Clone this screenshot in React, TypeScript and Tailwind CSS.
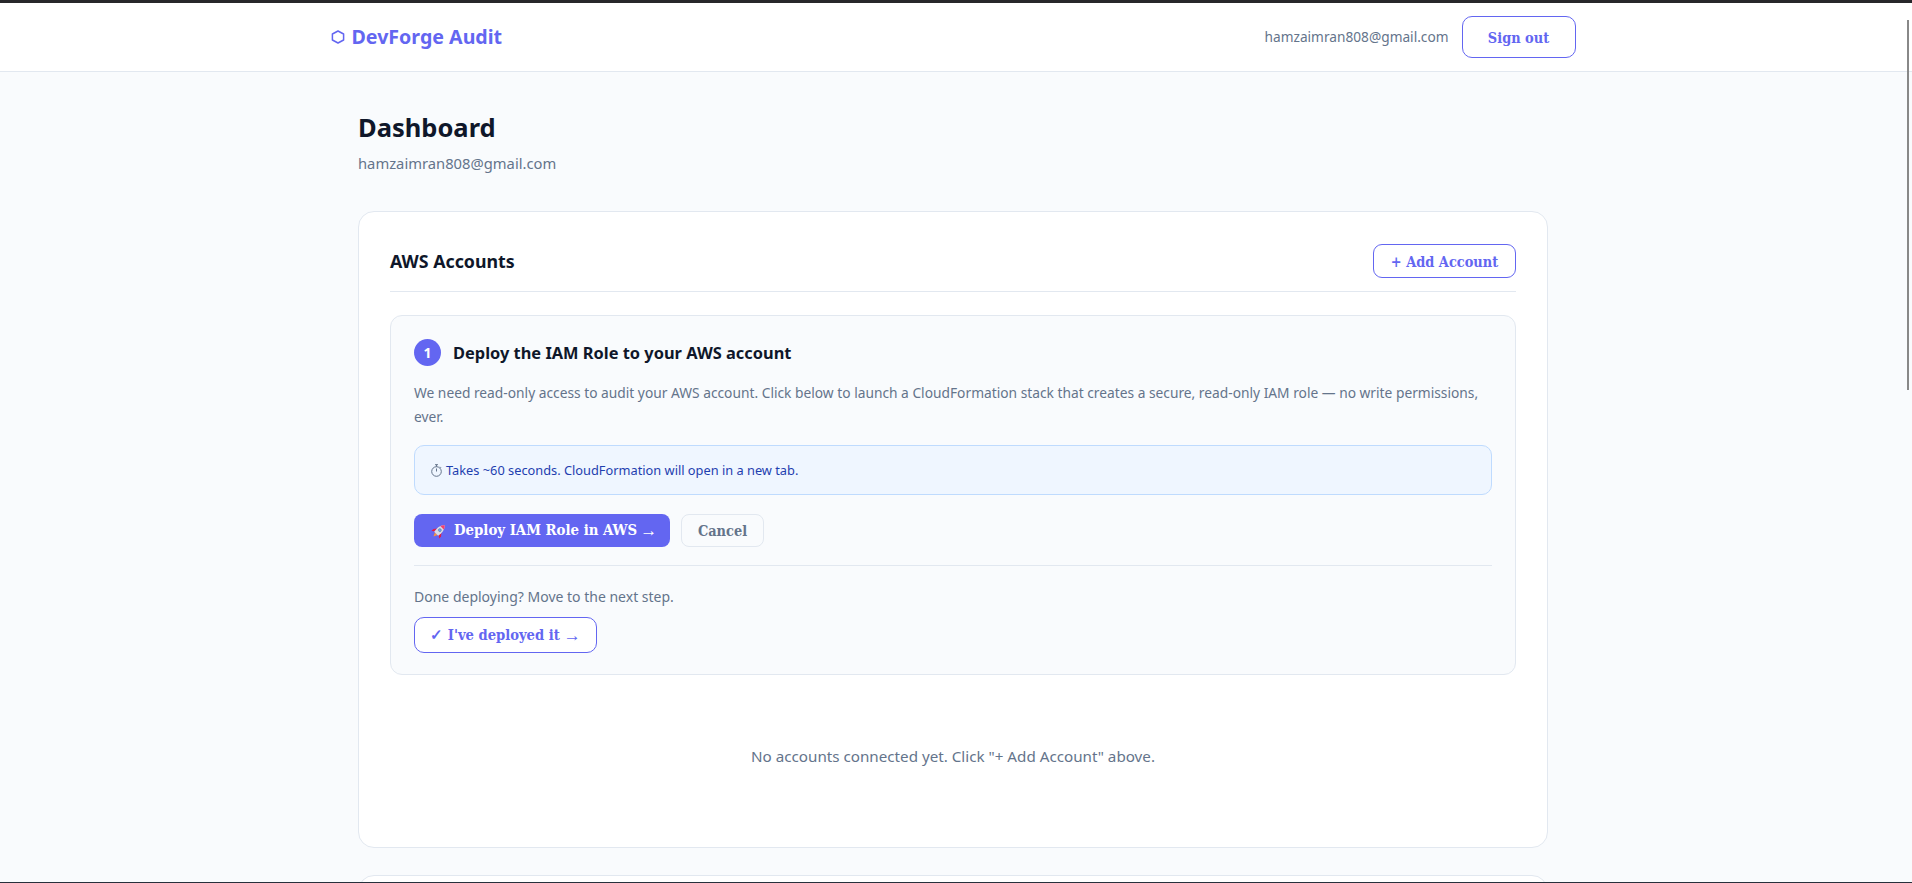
import React from "react";

const sans = "font-['Noto_Sans',sans-serif]";
const serif = "font-['DejaVu_Serif_Condensed','DejaVu_Serif',serif]";

function Arrow() {
  return <span className="font-['Liberation_Serif'] text-[17px] leading-none font-normal">→</span>;
}

function Hexagon() {
  return (
    <svg width="14" height="14" viewBox="0 0 14 14" fill="none" stroke="#6366f1" strokeWidth="1.5" className="shrink-0">
      <path d="M7 1 L12.6 4 V10 L7 13 L1.4 10 V4 Z" strokeLinejoin="round" />
    </svg>
  );
}

function Rocket() {
  return (
    <svg width="16" height="16" viewBox="0 0 16 16" className="shrink-0">
      <g transform="rotate(45 8 8)">
        <path d="M6.2 12 H9.8 L8 15.8 Z" fill="#fb923c" />
        <path d="M5 7.5 L2.6 10.5 V13.2 L5.2 11.4 Z" fill="#e11d48" />
        <path d="M11 7.5 L13.4 10.5 V13.2 L10.8 11.4 Z" fill="#e11d48" />
        <path d="M8 0 C10.4 2 11.2 5 11.2 8 L10.8 12 H5.2 L4.8 8 C4.8 5 5.6 2 8 0 Z" fill="#d8dbe6" />
        <path d="M8 0 C9.2 1 10 2.2 10.5 3.6 H5.5 C6 2.2 6.8 1 8 0 Z" fill="#f43f6e" />
        <circle cx="8" cy="6.8" r="1.5" fill="#60a5fa" stroke="#64748b" strokeWidth="0.5" />
      </g>
    </svg>
  );
}

function Stopwatch() {
  return (
    <svg width="11" height="13" viewBox="0 0 11 13" fill="none" stroke="#64748b" strokeWidth="1" className="shrink-0">
      <circle cx="5.5" cy="7.5" r="4.8" />
      <path d="M4 .7h3M5.5 .7v2M5.5 7.5V4.5M9 2.8l1 1" />
    </svg>
  );
}

export default function App() {
  return (
    <div className={`relative flex h-screen flex-col overflow-hidden bg-[#f9fbfd] ${sans}`}>
      <div className="h-[3px] shrink-0 bg-[#27272a]" />
      <header className="flex h-[69px] shrink-0 border-b border-[#e2e8f0] bg-white pr-[6px]">
        <div className="mx-auto flex w-[1245px] items-center justify-between">
          <div className="flex items-center gap-[7px] text-[19.6px] font-bold text-[#6366f1]">
            <Hexagon />
            <span>DevForge Audit</span>
          </div>
          <div className="flex items-center gap-[13px]">
            <span className="text-[13.7px] text-[#64748b]">hamzaimran808@gmail.com</span>
            <button className={`h-[42px] w-[114px] rounded-[10px] border border-[#6366f1] bg-white pt-[1px] text-[14.4px] font-bold text-[#6366f1] ${serif}`}>
              Sign out
            </button>
          </div>
        </div>
      </header>

      <main className="mx-auto flex w-[1190px] -translate-x-[3px] shrink-0 flex-col pt-[37px]">
        <h1 className="text-[25.5px] leading-[36px] font-bold text-[#0f172a]">Dashboard</h1>
        <p className="mt-[6px] text-[14.75px] leading-[24px] text-[#64748b]">hamzaimran808@gmail.com</p>

        <section className="mt-[36px] flex h-[637px] flex-col rounded-[16px] border border-[#e2e8f0] bg-white px-[31px] pt-[32px]">
          <div className="flex h-[48px] items-start justify-between border-b border-[#e2e8f0]">
            <h2 className="pt-[5px] text-[17.8px] leading-[24px] font-bold text-[#0f172a]">AWS Accounts</h2>
            <button className={`h-[34px] w-[143px] rounded-[9px] border border-[#6366f1] bg-white pt-[1px] text-[14.4px] font-bold text-[#6366f1] ${serif}`}>
              + Add Account
            </button>
          </div>

          <div className="mt-[23px] flex h-[360px] flex-col rounded-[12px] border border-[#e2e8f0] bg-[#f9fbfd] px-[23px] pt-[23px]">
            <div className="flex items-center gap-[12px]">
              <span className="flex h-[27px] w-[27px] items-center justify-center rounded-full bg-[#6366f1] text-[14px] font-bold text-white">1</span>
              <h3 className="pt-[1px] text-[16.4px] font-bold text-[#0f172a]">Deploy the IAM Role to your AWS account</h3>
            </div>
            <p className="mt-[15px] text-[13.78px] leading-[24px] text-[#64748b]">
              We need read-only access to audit your AWS account. Click below to launch a CloudFormation stack that creates a secure, read-only IAM role — no write permissions, ever.
            </p>
            <div className="mt-[16px] flex h-[50px] items-center gap-[4px] rounded-[10px] border border-[#bfdbfe] bg-[#eff6ff] px-[16px] text-[12.8px] text-[#1e40af]">
              <Stopwatch />
              <span className="pt-[2px]">Takes ~60 seconds. CloudFormation will open in a new tab.</span>
            </div>
            <div className="mt-[19px] flex gap-[11px]">
              <button className={`flex h-[33px] w-[256px] items-center gap-[7px] rounded-[8px] bg-[#6366f1] pl-[17px] text-[14.8px] font-bold text-white ${serif}`}>
                <Rocket />
                <span className="flex items-center gap-[3px]">Deploy IAM Role in AWS <Arrow /></span>
              </button>
              <button className={`h-[33px] w-[83px] rounded-[8px] border border-[#e2e8f0] bg-[#f9fbfd] text-[14.4px] font-bold text-[#64748b] ${serif}`}>
                Cancel
              </button>
            </div>
            <div className="mt-[18px] border-t border-[#e2e8f0] pt-[20px]">
              <p className="text-[14px] leading-[22px] text-[#64748b]">Done deploying? Move to the next step.</p>
              <button className={`mt-[9px] flex h-[36px] w-[183px] items-center justify-center gap-[4px] rounded-[10px] border border-[#6366f1] bg-white text-[14.6px] font-bold text-[#6366f1] ${serif}`}>
                <span>✓ I've deployed it</span> <Arrow />
              </button>
            </div>
          </div>

          <p className="mt-[69px] text-center text-[15.2px] leading-[24px] text-[#64748b]">No accounts connected yet. Click "+ Add Account" above.</p>
        </section>

        <div className="mt-[27px] h-[40px] rounded-t-[16px] border border-[#e2e8f0] bg-white" />
      </main>

      <div className="absolute top-[20px] right-[3px] h-[370px] w-[2px] bg-[#888888]" />
      <div className="absolute right-0 bottom-0 left-0 h-[1px] bg-[#27303b]" />
    </div>
  );
}
